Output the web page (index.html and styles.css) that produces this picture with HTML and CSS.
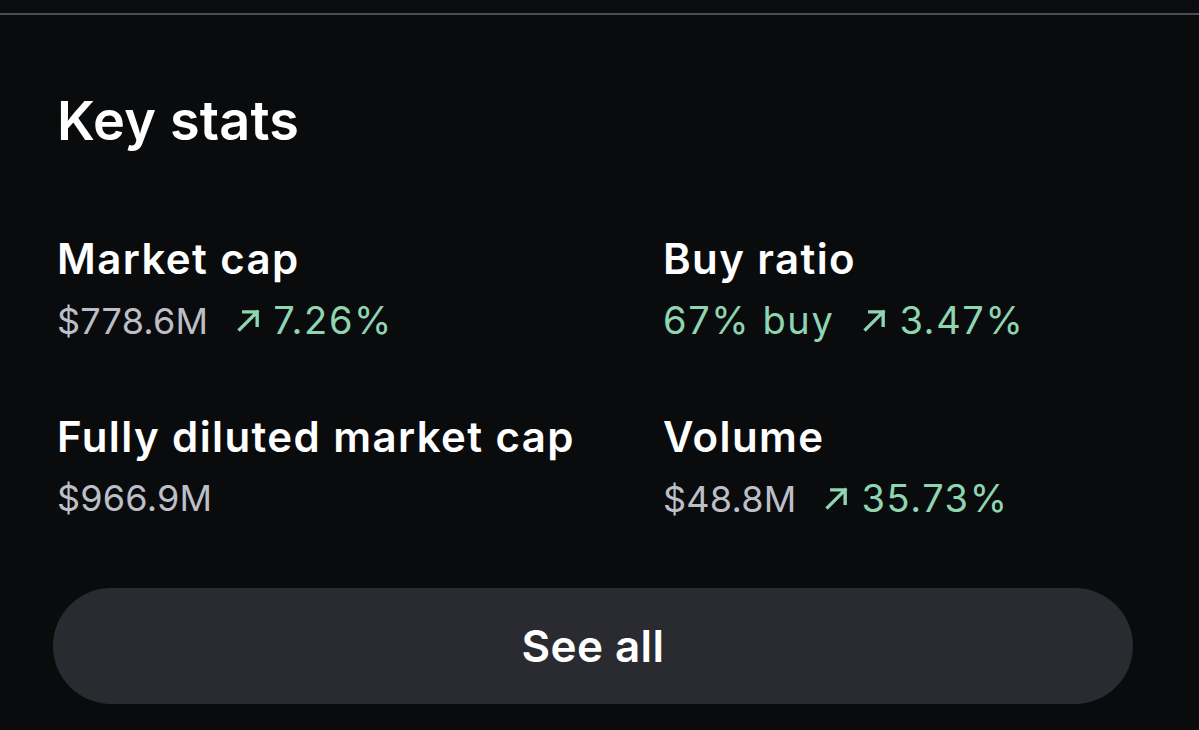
FILE: index.html
```html
<!DOCTYPE html>
<html lang="en">
<head>
<meta charset="utf-8">
<title>Key stats</title>
<link rel="stylesheet" href="styles.css">
</head>
<body>
<div class="topbar"></div>
<div class="divider"></div>
<main class="panel">
  <h2 class="title">Key stats</h2>
  <div class="stats">
    <div class="stat">
      <div class="label">Market cap</div>
      <div class="value"><span class="muted">$778.6M</span><span class="change"><svg class="arrow" viewBox="0 0 24 24"><path d="M4 20 L19 5 M7.5 5 H19 V16.5"/></svg>7.26%</span></div>
    </div>
    <div class="stat">
      <div class="label">Buy ratio</div>
      <div class="value"><span class="pos">67% buy</span><span class="change"><svg class="arrow" viewBox="0 0 24 24"><path d="M4 20 L19 5 M7.5 5 H19 V16.5"/></svg>3.47%</span></div>
    </div>
    <div class="stat">
      <div class="label">Fully diluted market cap</div>
      <div class="value"><span class="muted">$966.9M</span></div>
    </div>
    <div class="stat">
      <div class="label">Volume</div>
      <div class="value"><span class="muted">$48.8M</span><span class="change"><svg class="arrow" viewBox="0 0 24 24"><path d="M4 20 L19 5 M7.5 5 H19 V16.5"/></svg>35.73%</span></div>
    </div>
  </div>
  <button class="see-all">See all</button>
</main>
</body>
</html>
```
FILE: styles.css
```css
* { box-sizing: border-box; }
html, body {
  margin: 0;
  background: #0a0b0d;
}
body {
  font-family: Inter, "Noto Sans", "Liberation Sans", sans-serif;
  color: #ffffff;
  width: 1199px;
  height: 730px;
  overflow: hidden;
}
.topbar {
  height: 13px;
  background: #0b0c0f;
}
.divider {
  height: 2px;
  background: #4c4d52;
}
.panel {
  padding: 76px 66px 0 53px;
}
.title {
  margin: 0 0 0 4px;
  font-size: 54px;
  line-height: 60px;
  font-weight: 600;
  letter-spacing: 0.2px;
}
.stats {
  display: grid;
  grid-template-columns: 606px 1fr;
  row-gap: 73px;
  margin-top: 85px;
  padding-left: 4px;
}
.label {
  font-size: 42px;
  line-height: 46px;
  font-weight: 600;
  letter-spacing: 1.4px;
}
.value {
  display: flex;
  align-items: baseline;
  margin-top: 18px;
  font-size: 36px;
  line-height: 40px;
  font-weight: 400;
  letter-spacing: 0.2px;
}
.muted { color: #bcbfc8; }
.pos {
  color: #8ed5b2;
  font-size: 38px;
  letter-spacing: 1.6px;
}
.change {
  display: inline-flex;
  align-items: baseline;
  color: #8ed5b2;
  font-size: 38px;
  letter-spacing: 1.6px;
  margin-left: 27px;
}
.arrow {
  align-self: center;
  width: 28px;
  height: 28px;
  margin-right: 10px;
  fill: none;
  stroke: #8ed5b2;
  stroke-width: 2.9;
  stroke-linecap: square;
}
.see-all {
  display: block;
  width: 1080px;
  height: 116px;
  margin-top: 69px;
  border: none;
  border-radius: 58px;
  background: #2a2b30;
  color: #ffffff;
  font-family: Inter, "Noto Sans", "Liberation Sans", sans-serif;
  font-size: 44px;
  font-weight: 600;
  letter-spacing: 0.4px;
}
```
